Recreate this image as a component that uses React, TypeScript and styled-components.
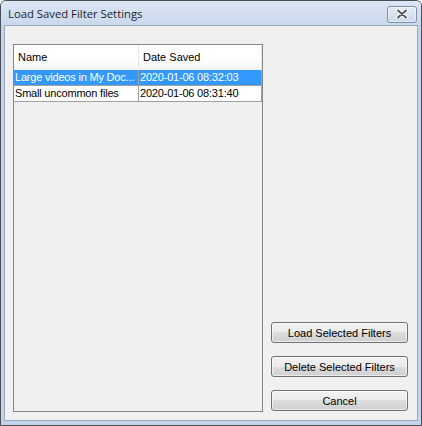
import React from "react";
import styled, { createGlobalStyle } from "styled-components";

const Global = createGlobalStyle`
  html, body { margin: 0; padding: 0; background: #f0f0f0; }
  body { font-family: "Liberation Sans", Arial, sans-serif; }
`;

const Window = styled.div`
  box-sizing: border-box;
  width: 422px;
  height: 426px;
  border: 1px solid #4b4f55;
  border-radius: 6px 6px 0 0;
  background: linear-gradient(#d6e2f1, #c3d4ea 24px, #c3d4ea);
  display: flex;
  flex-direction: column;
  overflow: hidden;
`;

const TitleBar = styled.div`
  height: 24px;
  flex: none;
  display: flex;
  align-items: center;
  justify-content: space-between;
  padding: 0 4px 0 7px;
  background: linear-gradient(#dbe6f4, #c9d9ed);
`;

const Title = styled.div`
  font-family: "Open Sans", "Noto Sans", sans-serif;
  font-size: 11.3px;
  color: #1e1e1e;
  padding-top: 1px;
`;

const CloseButton = styled.div`
  box-sizing: border-box;
  width: 30px;
  height: 17px;
  margin-top: 2px;
  border: 1px solid #7c8ea6;
  border-radius: 3px;
  background: linear-gradient(#e4ecf6, #ccd9ea);
  display: flex;
  align-items: center;
  justify-content: center;
  box-shadow: inset 0 0 0 1px rgba(255, 255, 255, 0.5);
`;

const Client = styled.div`
  flex: 1;
  margin: 0 3px 4px 3px;
  border: 1px solid #9aa9bd;
  background: #f0f0f0;
  display: flex;
  gap: 8px;
  padding: 18px 9px 8px 8px;
  box-sizing: border-box;
`;

const List = styled.div`
  box-sizing: border-box;
  width: 250px;
  border: 1px solid #828790;
  background: #f0f0f0;
  display: flex;
  flex-direction: column;
`;

const Header = styled.div`
  display: flex;
  height: 24px;
  background: linear-gradient(#ffffff, #ffffff 50%, #f5f6f7);
  border-bottom: 1px solid #f0f0f0;
`;

const HeaderCell = styled.div<{ $w: number }>`
  box-sizing: border-box;
  width: ${(p) => p.$w}px;
  flex: none;
  font-family: "Liberation Sans", Arial, sans-serif;
  font-size: 11px;
  color: #000;
  padding: 6px 0 0 4px;
  border-right: 1px solid #e5e5e5;
  white-space: nowrap;
`;

const Row = styled.div<{ $sel?: boolean }>`
  display: flex;
  height: 16px;
  box-sizing: border-box;
  border-bottom: 1px solid #a0a0a0;
  background: ${(p) => (p.$sel ? "#3399ff" : "#ffffff")};
  color: ${(p) => (p.$sel ? "#ffffff" : "#000000")};
`;

const Cell = styled.div<{ $w: number }>`
  box-sizing: border-box;
  width: ${(p) => p.$w}px;
  flex: none;
  font-family: "Liberation Sans", Arial, sans-serif;
  font-size: 11px;
  letter-spacing: -0.2px;
  line-height: 15px;
  padding-left: 1px;
  border-right: 1px solid #a0a0a0;
  white-space: nowrap;
  overflow: hidden;
`;

const Buttons = styled.div`
  flex: 1;
  display: flex;
  flex-direction: column;
  justify-content: flex-end;
  gap: 13px;
  padding-bottom: 1px;
`;

const Button = styled.button`
  box-sizing: border-box;
  width: 137px;
  height: 21px;
  border: 1px solid #707070;
  border-radius: 3px;
  padding: 0;
  background: linear-gradient(#f2f2f2, #ebebeb 50%, #dddddd 50%, #cfcfcf);
  box-shadow: inset 0 0 0 1px rgba(255, 255, 255, 0.6);
  font-family: "Liberation Sans", Arial, sans-serif;
  font-size: 11px;
  color: #000;
`;

export default function App() {
  return (
    <>
      <Global />
      <Window>
        <TitleBar>
          <Title>Load Saved Filter Settings</Title>
          <CloseButton>
            <svg width="14" height="10" viewBox="0 0 14 10">
              <path
                d="M3 1.5 L11 8.5 M11 1.5 L3 8.5"
                stroke="#ffffff"
                strokeWidth="4"
                strokeLinecap="round"
              />
              <path
                d="M3 1.5 L11 8.5 M11 1.5 L3 8.5"
                stroke="#4f5864"
                strokeWidth="2"
                strokeLinecap="round"
              />
            </svg>
          </CloseButton>
        </TitleBar>
        <Client>
          <List>
            <Header>
              <HeaderCell $w={125}>Name</HeaderCell>
              <HeaderCell $w={123}>Date Saved</HeaderCell>
            </Header>
            <Row $sel>
              <Cell $w={125}>Large videos in My Doc...</Cell>
              <Cell $w={123}>2020-01-06 08:32:03</Cell>
            </Row>
            <Row>
              <Cell $w={125}>Small uncommon files</Cell>
              <Cell $w={123}>2020-01-06 08:31:40</Cell>
            </Row>
          </List>
          <Buttons>
            <Button>Load Selected Filters</Button>
            <Button>Delete Selected Filters</Button>
            <Button>Cancel</Button>
          </Buttons>
        </Client>
      </Window>
    </>
  );
}
